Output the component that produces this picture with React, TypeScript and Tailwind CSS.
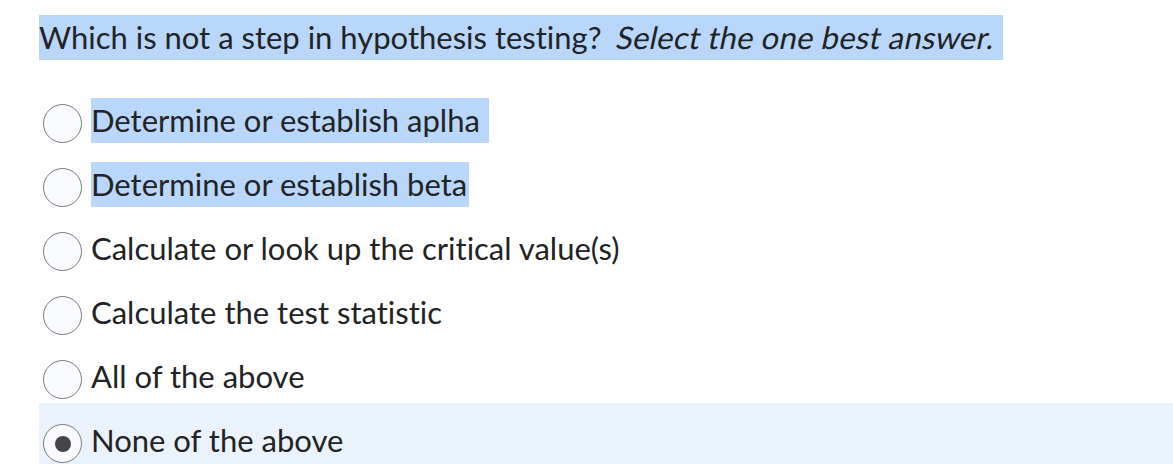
import React from "react";

const options = [
  { label: "Determine or establish aplha", hl: "bg-[#b9d6fb] pr-[9px]" },
  { label: "Determine or establish beta", hl: "bg-[#b9d6fb] pr-[2px]" },
  { label: "Calculate or look up the critical value(s)", hl: "" },
  { label: "Calculate the test statistic", hl: "" },
  { label: "All of the above", hl: "" },
  { label: "None of the above", hl: "", selected: true },
];

export default function App() {
  return (
    <div
      className="w-[1173px] h-[464px] overflow-hidden bg-white text-[#222324] pl-[39px] pt-[15px] [font-variant-ligatures:none]"
      style={{ fontFamily: "Lato, 'Open Sans', sans-serif" }}
    >
      <div className="text-[31px] leading-[45px]">
        <span className="bg-[#b9d6fb] inline-block pr-[7px]">
          Which is not a step in hypothesis testing?&nbsp;&nbsp;
          <span className="inline-block -skew-x-12 tracking-[0.2px]">Select the one best answer.</span>
        </span>
      </div>
      <div className="mt-[38px] flex flex-col gap-[19px]">
        {options.map((o, i) => (
          <div
            key={i}
            className={
              o.selected
                ? "flex items-end gap-[9px] pl-[4px] -mt-[15px] py-[15px] bg-[#eaf2fc]"
                : "flex items-end gap-[9px] pl-[4px]"
            }
          >
            <div className="w-[39px] h-[39px] shrink-0 rounded-full border-[1.5px] border-[#7a7a7a] bg-[#f9fbff] flex items-center justify-center">
              {o.selected && <div className="w-[16px] h-[16px] rounded-full bg-[#454545]" />}
            </div>
            <span className={"text-[31px] leading-[45px] " + o.hl}>{o.label}</span>
          </div>
        ))}
      </div>
    </div>
  );
}
